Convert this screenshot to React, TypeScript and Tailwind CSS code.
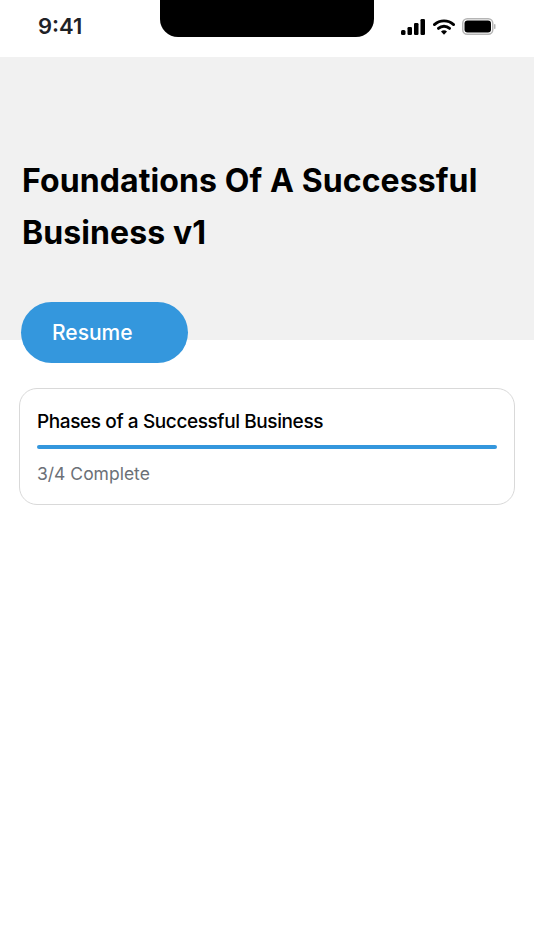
const font = { fontFamily: '"Inter", "Liberation Sans", sans-serif' };

const StatusBar = () => (
  <div className="relative flex h-[57px] items-center justify-between bg-white px-[38px]">
    <span className="-mt-[6px] text-[22px] font-semibold leading-none text-[#1f2226]">9:41</span>
    {/* notch */}
    <div className="absolute left-[160px] top-0 h-[37px] w-[214px] rounded-b-[18px] bg-black" />
    <div className="-mt-[4px] flex items-center">
      <svg width="24" height="16" viewBox="0 0 24 16">
        <rect x="0" y="11" width="4.5" height="5" rx="1.5" fill="#000" />
        <rect x="6.5" y="8" width="4.5" height="8" rx="1.2" fill="#000" />
        <rect x="13" y="4" width="4.5" height="12" rx="1.2" fill="#000" />
        <rect x="19.5" y="0" width="4.5" height="16" rx="1.2" fill="#000" />
      </svg>
      <svg width="22" height="16" viewBox="0 0 22 16" className="ml-[8px]">
        <path d="M1.4 5.6 C6.8 0.6 15.2 0.6 20.6 5.6" fill="none" stroke="#000" strokeWidth="2.8" strokeLinecap="round" />
        <path d="M5.4 9.4 C8.6 6.5 13.4 6.5 16.6 9.4" fill="none" stroke="#000" strokeWidth="2.8" strokeLinecap="round" />
        <path d="M8 12.4 C9.8 10.9 12.2 10.9 14 12.4 L11 15.8 Z" fill="#000" />
      </svg>
      <svg width="34" height="17" viewBox="0 0 34 17" className="ml-[7px]">
        <rect x="0.75" y="0.75" width="30" height="15.5" rx="4.5" fill="none" stroke="#b5b5b5" strokeWidth="1.5" />
        <rect x="2.5" y="2.5" width="26.5" height="12" rx="3" fill="#000" />
        <rect x="32" y="6" width="1.5" height="5" rx="0.7" fill="#b5b5b5" />
      </svg>
    </div>
  </div>
);

export default function App() {
  return (
    <div className="h-[950px] w-[534px] overflow-hidden bg-white" style={font}>
      <StatusBar />
      <div className="h-[283px] bg-[#f1f1f1] px-[22px] pt-[98px]">
        <h1 className="text-[32px] font-bold leading-[52px] tracking-[0.1px] text-black">
          Foundations Of A Successful Business v1
        </h1>
      </div>
      <button className="relative -mt-[38px] ml-[21px] flex h-[61px] w-[167px] items-center rounded-full bg-[#3497dd] pl-[31px] text-[21px] font-medium text-white">
        Resume
      </button>
      <div className="mx-[19px] mt-[25px] h-[117px] rounded-[18px] border border-[#d9d9d9] bg-white px-[17px] pt-[20px]">
        <p className="text-[19px] font-medium leading-[26px] tracking-[-0.4px] text-black">
          Phases of a Successful Business
        </p>
        <div className="mt-[10px] h-[4px] rounded-full bg-[#3497dd]" />
        <p className="mt-[13px] text-[17.5px] leading-[24px] text-[#6b7077]">3/4 Complete</p>
      </div>
    </div>
  );
}
